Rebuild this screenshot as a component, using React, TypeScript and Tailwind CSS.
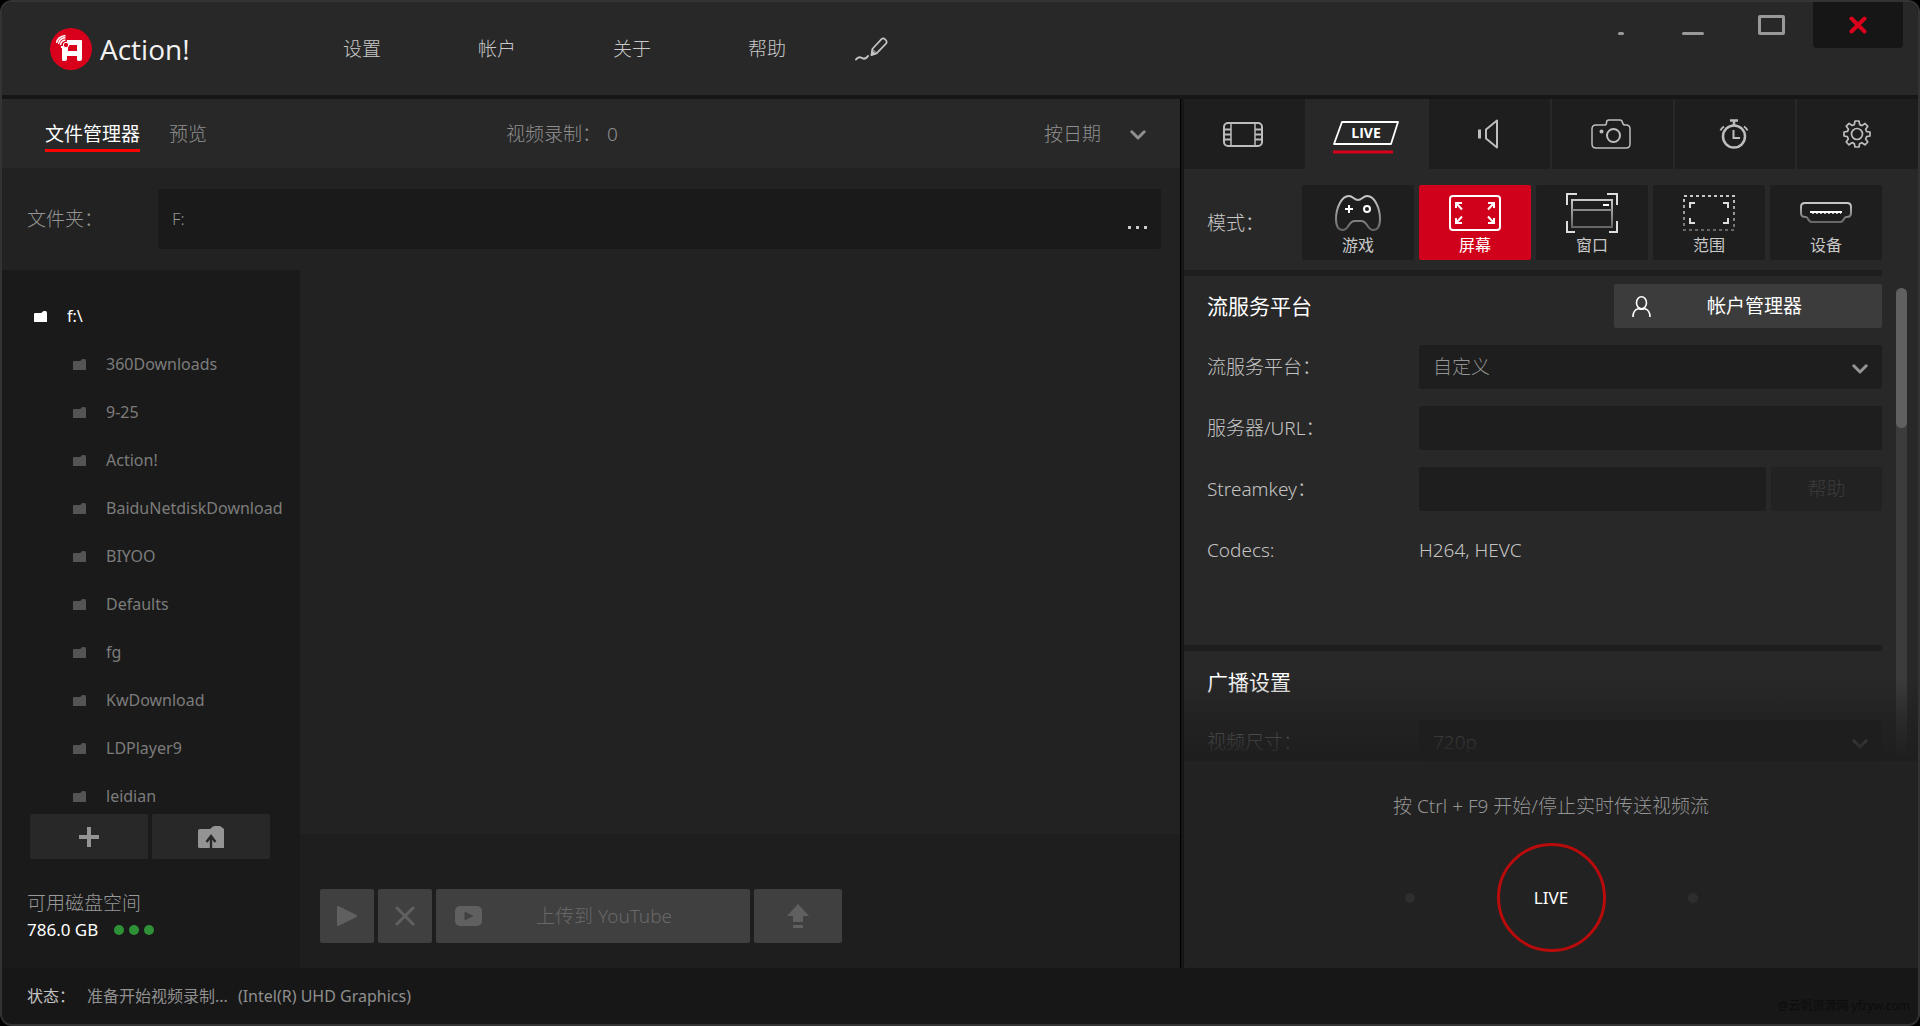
import { ReactNode, useState } from 'react';
import clsx from 'clsx';

const FOLDERS = [
  '360Downloads',
  '9-25',
  'Action!',
  'BaiduNetdiskDownload',
  'BIYOO',
  'Defaults',
  'fg',
  'KwDownload',
  'LDPlayer9',
  'leidian',
];

const MENU = ['设置', '帐户', '关于', '帮助'];

function ChevronIcon({ className }: { className?: string }) {
  return (
    <svg
      className={className}
      width="16"
      height="10"
      viewBox="0 0 16 10"
      fill="none"
      stroke="currentColor"
      strokeWidth="3"
      strokeLinecap="round"
      strokeLinejoin="round"
    >
      <path d="M1.8 1.8 8 8l6.2-6.2" />
    </svg>
  );
}

function FolderIcon({ className }: { className?: string }) {
  return (
    <svg className={className} width="14" height="11" viewBox="0 0 14 11" fill="currentColor">
      <path d="M1 2h6.2l1.6-1.6Q9.200 0 9.800 0h1.800q.6 0 .9.500L13 2v9H.5q-.5 0-.5-.5V3q0-1 1-1Z" />
    </svg>
  );
}

function LogoIcon() {
  return (
    <svg width="42" height="42" viewBox="0 0 42 42" fill="none">
      <circle cx="21" cy="21" r="21" fill="#d9001b" />
      <path
        d="M17 12h14q1 0 1 1v18q0 2-2 2h-2q-1 0-1-2v-3H17v3q0 2-2 2h-2q-1 0-1-2V20h-1v-2h5Zm1 6v5h9v-6h-7Z"
        fill="#fff"
        fillRule="evenodd"
      />
      <circle cx="16" cy="17" r="2.700" fill="#d9001b" stroke="#fff" strokeWidth="1" />
      <path
        d="M10.500 17q.5-4.500 5-5M8.500 16q.5-5.500 7-6.500M6.500 15q1-6.500 9-7.500"
        stroke="#fff"
        strokeWidth="1.400"
      />
    </svg>
  );
}

function PencilIcon() {
  return (
    <svg
      width="33"
      height="24"
      viewBox="0 0 33 24"
      fill="none"
      stroke="currentColor"
      strokeWidth="1.700"
      strokeLinecap="round"
      strokeLinejoin="round"
    >
      <path d="m16.500 18 .8-6L26.500 2.200q1.700-1.600 3.900.4t.6 4L21.800 16.200l-5.300 1.800Z" />
      <path d="m17.300 12 4.500 4.200" strokeWidth="1" />
      <path d="m16.500 18 .5-3.500 3 2.500Z" fill="currentColor" />
      <path d="M1 22.500q2.500-3.500 6-1.500t6-2" strokeWidth="2" />
    </svg>
  );
}

function FilmIcon() {
  return (
    <svg width="40" height="25" viewBox="0 0 40 25" fill="none" stroke="currentColor">
      <rect x="1" y="1" width="38" height="23" rx="4" strokeWidth="2" />
      <path d="M8 1v23M32 1v23" strokeWidth="1.500" />
      <path d="M1 7.500h7M1 12.500h7M1 17.500h7M32 7.500h7M32 12.500h7M32 17.500h7" strokeWidth="2" />
    </svg>
  );
}

function LiveIcon() {
  return (
    <svg width="66" height="33" viewBox="0 0 66 33" fill="none">
      <path d="M9 1h56l-7 22H1Z" stroke="#fff" strokeWidth="1.800" strokeLinejoin="round" />
      <path d="M0 31h60" stroke="#d9001b" strokeWidth="3" />
      <text
        x="33"
        y="17"
        textAnchor="middle"
        fill="#fff"
        fontSize="14"
        fontWeight="700"
        fontFamily="Open Sans, Noto Sans, sans-serif"
      >
        LIVE
      </text>
    </svg>
  );
}

function SpeakerIcon() {
  return (
    <svg width="21" height="30" viewBox="0 0 21 30" fill="none" stroke="currentColor">
      <path d="M1.500 10.500v9" strokeWidth="3" />
      <path d="M19 1.500v27L8 19.500v-9Z" strokeWidth="2" strokeLinejoin="round" />
    </svg>
  );
}

function CameraIcon() {
  return (
    <svg width="40" height="30" viewBox="0 0 40 30" fill="none" stroke="currentColor" strokeWidth="1.500">
      <path d="M5 6h9q1.500 0 1.500-2.500T18 1h11q2 0 2.500 2.500T34 6h1q4 0 4 4v15q0 4-4 4H5q-4 0-4-4V10q0-4 4-4Z" />
      <circle cx="22.500" cy="16.500" r="6.500" strokeWidth="2" />
      <circle cx="10.500" cy="12.500" r="2" fill="currentColor" stroke="none" />
    </svg>
  );
}

function TimerIcon() {
  return (
    <svg width="30" height="30" viewBox="0 0 30 30" fill="none" stroke="currentColor">
      <circle cx="15" cy="17.500" r="11" strokeWidth="2.500" />
      <path d="M11 1.500h8M15 1v5" strokeWidth="2.500" />
      <path d="M1.500 11.500q1-2.500 3.500-4M28.500 11.500q-1-2.500-3.500-4" strokeWidth="2" />
      <path d="M14.500 11v8H21" strokeWidth="2" />
    </svg>
  );
}

function GearIcon() {
  return (
    <svg width="28" height="28" viewBox="0 0 28 28" fill="none" stroke="currentColor" strokeWidth="1.700">
      <circle cx="14" cy="14" r="5.500" />
      <path
        strokeLinejoin="round"
        d="M12 1h4l.7 3.600 2.300 1 3-2.100 2.800 2.800L22.700 9.300l1 2.400L27 12v4l-3.400.7-1 2.300 2.200 3-2.800 2.800-3.200-2.100-2.200 1L16 27h-4l-.7-3.400-2.300-1-3 2.200-2.800-2.800 2.100-3.100-1-2.300L1 16v-4l3.500-.6 1-2.200L3.300 6.200l2.800-2.800 3 2.100 2.200-.9Z"
      />
    </svg>
  );
}

// The mode icons fade towards their lower edge.
function FadeDefs({ id }: { id: string }) {
  return (
    <defs>
      <linearGradient id={id} x1="0" y1="0" x2="0" y2="1">
        <stop offset="0" stopColor="#c8c8c8" />
        <stop offset="1" stopColor="#666" />
      </linearGradient>
    </defs>
  );
}

function GamepadIcon() {
  return (
    <svg width="52" height="36" viewBox="0 0 52 36" fill="none">
      <FadeDefs id="fadePad" />
      <path
        d="M17 1c4 0 5 4 9 4s5-4 9-4c8 0 13 13 13 23 0 8-3 11-7 11-6 0-5-9-12-9h-6c-7 0-6 9-12 9-4 0-7-3-7-11C4 14 9 1 17 1Z"
        stroke="url(#fadePad)"
        strokeWidth="2"
      />
      <path d="M17 10v8M13 14h8" stroke="#fff" strokeWidth="2" />
      <circle cx="35" cy="14" r="3" stroke="#fff" strokeWidth="2" />
    </svg>
  );
}

function ScreenIcon() {
  return (
    <svg width="52" height="36" viewBox="0 0 52 36" fill="none" stroke="#fff" strokeWidth="2">
      <rect x="1" y="1" width="50" height="34" rx="3" />
      <path d="M7 13V8h6M7 8l6 6.500M45 13V8h-6M45 8l-6 6.500M7 23v5h6M7 28l6-6.500M45 23v5h-6M45 28l-6-6.500" />
    </svg>
  );
}

function WindowIcon() {
  return (
    <svg width="52" height="40" viewBox="0 0 52 40" fill="none">
      <FadeDefs id="fadeWin" />
      <path d="M1 12V1h10M41 1h10v11M1 28v11h8M43 39h8V28" stroke="#ddd" strokeWidth="2" />
      <rect x="6" y="7" width="40" height="27" stroke="url(#fadeWin)" strokeWidth="2" />
      <path d="M6 17h40" stroke="#888" strokeWidth="2" />
      <path d="M37 12h6" stroke="#fff" strokeWidth="2" />
    </svg>
  );
}

function AreaIcon() {
  return (
    <svg width="52" height="36" viewBox="0 0 52 36" fill="none">
      <FadeDefs id="fadeArea" />
      <rect x="1" y="1" width="50" height="34" stroke="url(#fadeArea)" strokeWidth="2" strokeDasharray="3 3" />
      <path d="M7 13V8h5M40 8h5v5M7 23v5h5M40 28h5v-5" stroke="#ddd" strokeWidth="2" />
    </svg>
  );
}

function DeviceIcon() {
  return (
    <svg width="52" height="36" viewBox="0 0 52 36" fill="none">
      <FadeDefs id="fadeDev" />
      <path
        d="M5 8h42q4 0 4 4v6q0 4-4 4h-1q-1 0-2 2t-3 3H11q-2-1-3-3t-2-2H5q-4 0-4-4v-6q0-4 4-4Z"
        stroke="url(#fadeDev)"
        strokeWidth="2"
      />
      <path d="M10 17h32" stroke="#fff" strokeWidth="2" />
      <path d="M12 18.500h29" stroke="#bbb" strokeWidth="1" strokeDasharray="2 2" />
    </svg>
  );
}

const TABS: { name: string; icon: ReactNode }[] = [
  { name: '视频录制', icon: <FilmIcon /> },
  { name: '实时传送', icon: <LiveIcon /> },
  { name: '音频录制', icon: <SpeakerIcon /> },
  { name: '屏幕截图', icon: <CameraIcon /> },
  { name: '基准测试', icon: <TimerIcon /> },
  { name: '选项', icon: <GearIcon /> },
];

const MODES: { name: string; icon: ReactNode }[] = [
  { name: '游戏', icon: <GamepadIcon /> },
  { name: '屏幕', icon: <ScreenIcon /> },
  { name: '窗口', icon: <WindowIcon /> },
  { name: '范围', icon: <AreaIcon /> },
  { name: '设备', icon: <DeviceIcon /> },
];

function Header() {
  return (
    <header className="flex h-[93px] shrink-0 justify-between bg-[#282828] pr-[15px]">
      <div className="flex items-center pl-12">
        <LogoIcon />
        <h1 className="ml-2 w-[243px] font-['Open_Sans',sans-serif] text-[28px] leading-10 font-normal text-[#f2f2f2]">
          Action!
        </h1>
        <nav className="flex items-center">
          {MENU.map((item) => (
            <a key={item} href="#" className="w-[135px] text-[#c8c8c8]">
              {item}
            </a>
          ))}
        </nav>
        <button type="button" aria-label="绘图" className="-ml-7 text-[#c4c4c4]">
          <PencilIcon />
        </button>
      </div>
      <div className="flex items-start text-[#999]">
        <button type="button" aria-label="迷你" className="flex h-[46px] w-[72px] items-center justify-center pt-4">
          <span className="h-[3px] w-[6px] rounded-xs bg-current" />
        </button>
        <button type="button" aria-label="最小化" className="flex h-[46px] w-[72px] items-center justify-center pt-4">
          <span className="h-[3px] w-[22px] rounded-xs bg-current" />
        </button>
        <button type="button" aria-label="最大化" className="flex h-[46px] w-[84px] items-center justify-center">
          <span className="h-5 w-[27px] rounded-xs border-3 border-current" />
        </button>
        <button
          type="button"
          aria-label="关闭"
          className="flex h-[46px] w-[90px] items-center justify-center rounded-b bg-[#161616] text-[#d9001b]"
        >
          <svg width="18" height="18" viewBox="0 0 18 18" stroke="currentColor" strokeWidth="4" strokeLinecap="round">
            <path d="m2.500 2.500 13 13m0-13-13 13" />
          </svg>
        </button>
      </div>
    </header>
  );
}

function Sidebar() {
  return (
    <aside className="flex w-[298px] shrink-0 flex-col bg-[#1a1a1a]">
      <ul className="min-h-0 flex-1 overflow-hidden pt-[22px] text-base font-normal text-[#7c7c7c]">
        <li className="flex h-12 items-center pl-8 text-white">
          <FolderIcon className="mr-[19px]" />
          f:\
        </li>
        {FOLDERS.map((name) => (
          <li key={name} className="flex h-12 items-center pl-[71px]">
            <FolderIcon className="mr-[19px] text-[#545454]" />
            {name}
          </li>
        ))}
      </ul>
      <div className="flex gap-1 px-7 text-[#949494]">
        <button type="button" aria-label="添加" className="flex h-[45px] w-[118px] items-center justify-center rounded-xs bg-[#282828]">
          <svg width="20" height="20" viewBox="0 0 20 20" stroke="currentColor" strokeWidth="4">
            <path d="M10 0v20M0 10h20" />
          </svg>
        </button>
        <button type="button" aria-label="上一级" className="flex h-[45px] w-[118px] items-center justify-center rounded-xs bg-[#282828]">
          <svg width="26" height="22" viewBox="0 0 26 22" fill="currentColor">
            <path d="M2 3h10l3-2.500q1-.5 2-.5h4q1.500 0 2.500 1L26 3v19H1.500Q0 22 0 20.500V5q0-2 2-2Z" />
            <path d="M13 22V10m-4.500 6 4.500-6 4.500 6" fill="none" stroke="#282828" strokeWidth="2.400" />
          </svg>
        </button>
      </div>
      <div className="px-[25px] pt-[30px] pb-[25px] text-[#999]">
        <p className="leading-7">可用磁盘空间</p>
        <p className="flex items-center text-[17px] leading-[26px] font-normal text-white">
          786.0 GB
          <span className="ml-4 flex gap-[5px]">
            <i className="size-[10px] rounded-full bg-[#2f9136]" />
            <i className="size-[10px] rounded-full bg-[#2f9136]" />
            <i className="size-[10px] rounded-full bg-[#2f9136]" />
          </span>
        </p>
      </div>
    </aside>
  );
}

function FilePanel() {
  return (
    <section className="mr-[3px] flex min-w-0 flex-1 flex-col border-r border-black bg-[#222]">
      <div className="flex h-[69px] items-center bg-[#282828] pr-[34px] pl-[43px] text-[#8f8f8f]">
        <button type="button" className="border-b-3 border-[#f00] pt-1 leading-[30px] font-normal text-white">
          文件管理器
        </button>
        <button type="button" className="ml-[29px]">
          预览
        </button>
        <p className="ml-[299px] flex gap-1.5">
          视频录制：<span>0</span>
        </p>
        <div className="relative ml-auto">
          <select aria-label="排序" className="w-[102px] appearance-none bg-transparent">
            <option>按日期</option>
          </select>
          <ChevronIcon className="pointer-events-none absolute top-2.5 right-0" />
        </div>
      </div>
      <div className="flex h-[102px] items-center pr-[19px] pl-[25px] text-[#949494]">
        <label htmlFor="folder" className="w-[131px]">
          文件夹：
        </label>
        <div className="flex h-[60px] flex-1 items-center rounded-xs bg-[#1a1a1a] px-3.5">
          <input id="folder" defaultValue="F:" className="min-w-0 flex-1 bg-transparent text-[17px] outline-none" />
          <button type="button" aria-label="浏览" className="flex gap-[5px] pt-4">
            <i className="size-[3px] bg-[#ccc]" />
            <i className="size-[3px] bg-[#ccc]" />
            <i className="size-[3px] bg-[#ccc]" />
          </button>
        </div>
      </div>
      <div className="flex min-h-0 flex-1">
        <Sidebar />
        <div className="flex min-w-0 flex-1 flex-col">
          <div className="flex-1" />
          <div className="flex h-[134px] gap-1 bg-[#1e1e1e] px-5 pt-[55px] text-[#606060]">
            <button type="button" aria-label="播放" className="flex h-[54px] w-[54px] items-center justify-center rounded-xs bg-[#404040]">
              <svg width="20" height="20" viewBox="0 0 20 20" fill="currentColor" stroke="currentColor" strokeWidth="2" strokeLinejoin="round">
                <path d="M1 1v18l18-9Z" />
              </svg>
            </button>
            <button type="button" aria-label="删除" className="flex h-[54px] w-[54px] items-center justify-center rounded-xs bg-[#404040]">
              <svg width="20" height="20" viewBox="0 0 20 20" stroke="currentColor" strokeWidth="3" strokeLinecap="round">
                <path d="m2 2 16 16m0-16L2 18" />
              </svg>
            </button>
            <button type="button" className="flex h-[54px] w-[314px] items-center rounded-xs bg-[#404040] pl-[19px]">
              <svg width="27" height="20" viewBox="0 0 27 20">
                <rect width="27" height="20" rx="5" fill="currentColor" />
                <path d="M9.500 5.500v9l9-4.500Z" fill="#404040" />
              </svg>
              <span className="ml-[54px] text-[#686868]">上传到 YouTube</span>
            </button>
            <button type="button" aria-label="上传" className="flex h-[54px] w-[88px] items-center justify-center rounded-xs bg-[#404040]">
              <svg width="22" height="24" viewBox="0 0 22 24" fill="currentColor">
                <path d="M11 0 22 12h-6v6H6v-6H0ZM6 21h10v3H6Z" />
              </svg>
            </button>
          </div>
        </div>
      </div>
    </section>
  );
}

function SettingRow({ label, htmlFor, children }: { label: string; htmlFor?: string; children: ReactNode }) {
  return (
    <div className="flex h-11 items-center">
      <label htmlFor={htmlFor} className="w-[212px] shrink-0">
        {label}
      </label>
      {children}
    </div>
  );
}

function SelectBox({ id, value }: { id: string; value: string }) {
  return (
    <div className="relative h-11 flex-1 text-[#949494]">
      <select id={id} className="h-full w-full appearance-none rounded-xs bg-[#1e1e1e] px-3.5">
        <option>{value}</option>
      </select>
      <ChevronIcon className="pointer-events-none absolute top-[19px] right-3.5" />
    </div>
  );
}

function LivePanel() {
  const [tab, setTab] = useState('实时传送');
  const [mode, setMode] = useState('屏幕');

  return (
    <section className="flex w-[734px] shrink-0 flex-col bg-[#282828]">
      <div className="grid grid-cols-6 gap-0.5">
        {TABS.map(({ name, icon }) => (
          <button
            key={name}
            type="button"
            aria-label={name}
            onClick={() => setTab(name)}
            className={clsx(
              'flex h-[70px] items-center justify-center pr-0.5 text-[#bdbdbd]',
              tab === name ? 'bg-[#282828] pt-[7px]' : 'bg-[#1e1e1e]'
            )}
          >
            {icon}
          </button>
        ))}
      </div>
      <div className="flex items-center gap-[5px] pt-4 pr-9 pb-[10px] pl-[23px] text-[#c8c8c8]">
        <span className="mr-auto">模式：</span>
        {MODES.map(({ name, icon }) => (
          <button
            key={name}
            type="button"
            onClick={() => setMode(name)}
            className={clsx(
              'flex h-[75px] w-28 flex-col items-center rounded-xs text-base leading-6 font-normal',
              mode === name ? 'bg-[#d0011b] text-white' : 'bg-[#1e1e1e]'
            )}
          >
            <span className="flex h-12 items-end">
              <span className="flex h-10 items-center">{icon}</span>
            </span>
            {name}
          </button>
        ))}
      </div>

      <div className="relative min-h-0 flex-1 overflow-hidden pr-9 text-[#c4c4c4]">
        <section className="border-t-6 border-[#1e1e1e] pt-2 pb-[73px] pl-[23px]">
          <div className="mb-[17px] flex h-11 items-center justify-between">
            <h2 className="text-[21px] leading-8 font-normal text-white">流服务平台</h2>
            <button
              type="button"
              className="flex h-11 w-[268px] items-center rounded-xs bg-[#3c3c3c] pl-[18px] font-normal text-white"
            >
              <svg width="19" height="21" viewBox="0 0 19 21" fill="none" stroke="currentColor" strokeWidth="1.600">
                <ellipse cx="9.500" cy="6.800" rx="5" ry="6" />
                <path d="M1 21q0-7 5.500-8.500 3 1.500 6 0Q18 14 18 21" />
              </svg>
              <span className="ml-14">帐户管理器</span>
            </button>
          </div>
          <div className="flex flex-col gap-[17px]">
            <SettingRow label="流服务平台：" htmlFor="platform">
              <SelectBox id="platform" value="自定义" />
            </SettingRow>
            <SettingRow label="服务器/URL：" htmlFor="server">
              <input id="server" className="h-11 min-w-0 flex-1 rounded-xs bg-[#1e1e1e] px-3.5 outline-none" />
            </SettingRow>
            <SettingRow label="Streamkey：" htmlFor="streamkey">
              <input id="streamkey" className="h-11 min-w-0 flex-1 rounded-xs bg-[#1e1e1e] px-3.5 outline-none" />
              <button type="button" disabled className="ml-[5px] h-11 w-[111px] rounded-xs bg-[#222] text-[#3c3c3c]">
                帮助
              </button>
            </SettingRow>
            <SettingRow label="Codecs:">
              <span>H264, HEVC</span>
            </SettingRow>
          </div>
        </section>
        <section className="border-t-6 border-[#1e1e1e] pt-[9px] pl-[23px]">
          <h2 className="mb-4 text-[21px] leading-[44px] font-normal text-white">广播设置</h2>
          <SettingRow label="视频尺寸：" htmlFor="size">
            <SelectBox id="size" value="720p" />
          </SettingRow>
        </section>
        <div className="absolute top-[18px] right-[11px] bottom-0 w-[11px] rounded-full bg-[#3c3c3c]">
          <div className="h-[140px] rounded-full bg-[#606060]" />
        </div>
        <div className="pointer-events-none absolute inset-x-0 bottom-0 h-[84px] bg-linear-to-b from-transparent via-[#1e1e1e]/60 to-[#1e1e1e]" />
      </div>

      <footer className="flex flex-col items-center rounded-bl bg-[#222] pt-[29px] pb-4">
        <p className="leading-8 text-[#949494]">按 Ctrl + F9 开始/停止实时传送视频流</p>
        <div className="mt-[21px] flex items-center gap-[82px]">
          <i className="size-[10px] rounded-full bg-[#2e2e2e]" />
          <button
            type="button"
            className="size-[109px] rounded-full border-3 border-[#b90b0b] text-[17px] font-normal text-white"
          >
            LIVE
          </button>
          <i className="size-[10px] rounded-full bg-[#2e2e2e]" />
        </div>
      </footer>
    </section>
  );
}

export default function App() {
  return (
    <div className="h-screen bg-black">
      <div className="flex h-full flex-col overflow-hidden rounded-xl border-2 border-[#333] bg-[#161616] font-['Noto_Sans','Noto_Sans_CJK_SC',sans-serif] text-[19px] leading-7 font-light">
        <Header />
        <main className="mt-1 flex min-h-0 flex-1">
          <FilePanel />
          <LivePanel />
        </main>
        <div className="flex h-14 shrink-0 items-center bg-[#171717] pr-2 pl-[25px] text-base font-normal text-[#8f8f8f]">
          <span className="w-[60px] text-[#c4c4c4]">状态：</span>
          <span>准备开始视频录制...</span>
          <span className="ml-2.5">(Intel(R) UHD Graphics)</span>
          <span className="ml-auto pt-5 text-xs text-[#0c0c0c]">@云帆资源网 yfzyw.com</span>
        </div>
      </div>
    </div>
  );
}
